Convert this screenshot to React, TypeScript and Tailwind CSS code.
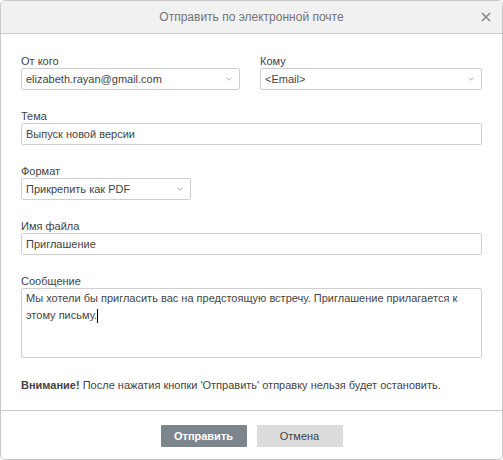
import React from 'react';

function Chevron() {
    return (
        <svg width="6" height="4" viewBox="0 0 6 4" className="shrink-0">
            <path d="M0.5 0.8 L3 3.2 L5.5 0.8" fill="none" stroke="#9a9a9a" strokeWidth="0.8" />
        </svg>
    );
}

function Field({ label, children }: { label: string; children: React.ReactNode }) {
    return (
        <div className="flex flex-col">
            <label className="leading-[14px] text-[11px] text-[#444]">{label}</label>
            {children}
        </div>
    );
}

function Select({ value, className = '' }: { value: string; className?: string }) {
    return (
        <div
            className={`flex items-center justify-between h-[22px] border border-[#cfcfcf] rounded-[2px] bg-white pl-[4px] pr-[7px] text-[11px] text-[#444] ${className}`}
        >
            <span className="truncate">{value}</span>
            <Chevron />
        </div>
    );
}

function Input({ value }: { value: string }) {
    return (
        <div className="flex items-center h-[22px] border border-[#cfcfcf] rounded-[2px] bg-white px-[4px] text-[11px] text-[#444]">
            {value}
        </div>
    );
}

export default function App() {
    return (
        <div
            className="w-[503px] h-[460px] flex flex-col bg-white border border-[#c8c8c8] rounded-[5px] overflow-hidden"
            style={{ fontFamily: '"Liberation Sans", Arial, sans-serif' }}
        >
            {/* Header */}
            <div className="relative h-[33px] shrink-0 flex items-center justify-center bg-[#f1f1f1] border-b border-[#cbcbcb]">
                <span className="text-[12px] text-[#747474]">Отправить по электронной почте</span>
                <button type="button" className="absolute right-[11px] top-[11px] w-[10px] h-[10px]">
                    <svg width="10" height="10" viewBox="0 0 10 10">
                        <path d="M1 1 L9 9 M9 1 L1 9" stroke="#888" strokeWidth="1.6" />
                    </svg>
                </button>
            </div>

            {/* Body */}
            <div className="flex flex-col gap-[19px] px-[20px] pt-[20px] pb-[18px]">
                <div className="grid grid-cols-[219px_1fr] gap-[20px]">
                    <Field label="От кого">
                        <Select value="elizabeth.rayan@gmail.com" />
                    </Field>
                    <Field label="Кому">
                        <Select value="<Email>" />
                    </Field>
                </div>
                <Field label="Тема">
                    <Input value="Выпуск новой версии" />
                </Field>
                <Field label="Формат">
                    <Select value="Прикрепить как PDF" className="w-[170px]" />
                </Field>
                <Field label="Имя файла">
                    <Input value="Приглашение" />
                </Field>
                <Field label="Сообщение">
                    <div className="h-[70px] border border-[#cfcfcf] rounded-[2px] bg-white px-[4px] pt-[1px] text-[11px] leading-[17px] text-[#444]">
                        Мы хотели бы пригласить вас на предстоящую встречу. Приглашение прилагается к этому письму.
                        <span className="inline-block w-px h-[14px] bg-black align-middle" />
                    </div>
                </Field>
                <p className="mt-px leading-[14px] text-[11px] text-[#444]">
                    <b>Внимание!</b> После нажатия кнопки 'Отправить' отправку нельзя будет остановить.
                </p>
            </div>

            {/* Footer */}
            <div className="flex justify-center gap-[10px] border-t border-[#cbcbcb] pt-[14px]">
                <button type="button" className="w-[86px] h-[22px] bg-[#7d858c] text-white text-[11px] font-bold rounded-[1px]">
                    Отправить
                </button>
                <button type="button" className="w-[86px] h-[22px] bg-[#dcdcdc] text-[#444] text-[11px] rounded-[1px]">
                    Отмена
                </button>
            </div>
        </div>
    );
}
